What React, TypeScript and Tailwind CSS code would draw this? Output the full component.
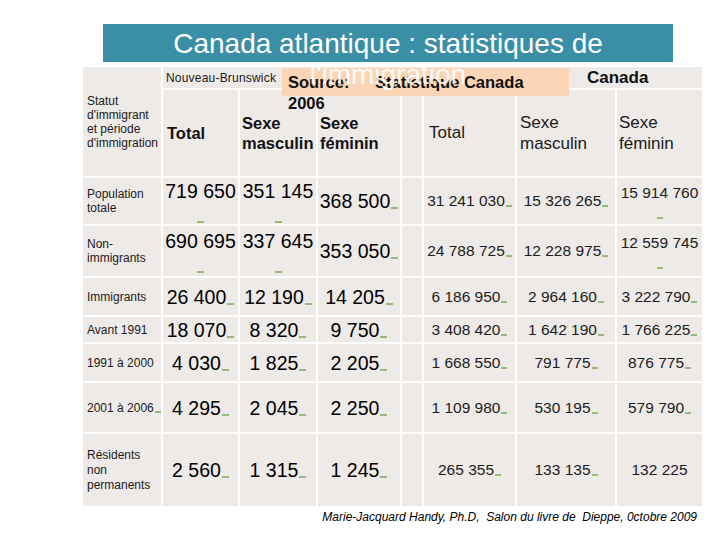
import React from "react";

const CELL = "bg-[#eeeae8]";

function Dash({ small = false }: { small?: boolean }) {
  return (
    <span
      className={
        small
          ? "inline-block w-[6px] h-[2px] bg-[#97b97b] ml-[1px] align-[-1px]"
          : "inline-block w-[7px] h-[2px] bg-[#97b97b] ml-[1px] align-[-1px]"
      }
    />
  );
}

type Row = {
  label: React.ReactNode;
  labelLeading: string;
  labelDash?: boolean;
  nb: string[];
  ca: string[];
  big?: boolean;
  caNoDash?: boolean[];
};

const rows: Row[] = [
  {
    label: (
      <>
        Population
        <br />
        totale
      </>
    ),
    labelLeading: "leading-[14px]",
    nb: ["719 650", "351 145", "368 500"],
    ca: ["31 241 030", "15 326 265", "15 914 760"],
    big: true,
  },
  {
    label: (
      <>
        Non-
        <br />
        immigrants
      </>
    ),
    labelLeading: "leading-[14px]",
    nb: ["690 695", "337 645", "353 050"],
    ca: ["24 788 725", "12 228 975", "12 559 745"],
    big: true,
  },
  {
    label: "Immigrants",
    labelLeading: "leading-[14px]",
    nb: ["26 400", "12 190", "14 205"],
    ca: ["6 186 950", "2 964 160", "3 222 790"],
  },
  {
    label: "Avant 1991",
    labelLeading: "leading-[14px]",
    nb: ["18 070", "8 320", "9 750"],
    ca: ["3 408 420", "1 642 190", "1 766 225"],
  },
  {
    label: "1991 à 2000",
    labelLeading: "leading-[14px]",
    nb: ["4 030", "1 825", "2 205"],
    ca: ["1 668 550", "791 775", "876 775"],
  },
  {
    label: "2001 à 2006",
    labelLeading: "leading-[14px]",
    labelDash: true,
    nb: ["4 295", "2 045", "2 250"],
    ca: ["1 109 980", "530 195", "579 790"],
  },
  {
    label: (
      <>
        Résidents
        <br />
        non
        <br />
        permanents
      </>
    ),
    labelLeading: "leading-[15px]",
    nb: ["2 560", "1 315", "1 245"],
    ca: ["265 355", "133 135", "132 225"],
    caNoDash: [false, false, true],
  },
];

const NB_TEXT = "whitespace-nowrap text-[19.5px] leading-[24px] text-black";
const CA_TEXT = "whitespace-nowrap text-[15.5px] leading-[18px] text-[#1c1c1c]";

function NbCell({ value, wrap }: { value: string; wrap?: boolean }) {
  if (wrap) {
    return (
      <div className={`${CELL} flex flex-col items-center justify-center`}>
        <span className={NB_TEXT}>{value}</span>
        <span className="block w-[7px] h-[2px] bg-[#97b97b] mt-[18px]" />
      </div>
    );
  }
  return (
    <div className={`${CELL} flex items-center justify-center`}>
      <span className={NB_TEXT}>
        {value}
        <Dash />
      </span>
    </div>
  );
}

function CaCell({ value, wrap, noDash }: { value: string; wrap?: boolean; noDash?: boolean }) {
  if (wrap) {
    return (
      <div className={`${CELL} flex flex-col items-center justify-center`}>
        <span className={CA_TEXT}>{value}</span>
        <span className="block w-[6px] h-[2px] bg-[#97b97b] mt-[15px]" />
      </div>
    );
  }
  return (
    <div className={`${CELL} flex items-center justify-center`}>
      <span className={CA_TEXT}>
        {value}
        {!noDash && <Dash small />}
      </span>
    </div>
  );
}

export default function App() {
  return (
    <div className="relative w-[720px] h-[540px] bg-white overflow-hidden font-['Liberation_Sans',Arial,sans-serif]">
      {/* Title */}
      <div className="pt-[24px] pl-[103px] relative z-30">
        <div className="w-[570px] h-[38px] bg-[#3a8ea5]">
          <div className="pt-[4px] text-center text-[28px] leading-[31px] text-white whitespace-nowrap">
            Canada atlantique : statistiques de
            <br />
            <span className="text-white/90">l'immigration</span>
          </div>
        </div>
      </div>

      {/* Table */}
      <div className="pl-[83px] pt-[5px]">
        <div className="grid grid-cols-[78px_75px_76px_82px_20px_91px_98px_85px] grid-rows-[21px_86px_46px_50px_37px_25px_37px_49px_72px] gap-[2px]">
          {/* header */}
          <div className={`${CELL} row-span-2 flex items-center pl-[4px] text-[12px] leading-[14px] text-[#1a1a1a]`}>
            <div>
              Statut
              <br />
              d'immigrant
              <br />
              et période
              <br />
              d'immigration
            </div>
          </div>
          <div className={`${CELL} col-span-3 flex items-center pl-[3px] text-[12px] tracking-[0.2px] text-[#1a1a1a]`}>
            Nouveau-Brunswick
          </div>
          <div className={CELL} />
          <div className={`${CELL} col-span-3 flex items-center pl-[163px] text-[17px] font-bold text-[#111]`}>
            Canada
          </div>

          <div className={`${CELL} flex items-center pl-[4px] text-[16.5px] font-bold text-[#111]`}>Total</div>
          <div className={`${CELL} flex items-center pl-[2px] text-[16.5px] leading-[20px] font-bold text-[#111]`}>
            <div>
              Sexe
              <br />
              masculin
            </div>
          </div>
          <div className={`${CELL} flex items-center pl-[2px] text-[16.5px] leading-[20px] font-bold text-[#111]`}>
            <div>
              Sexe
              <br />
              féminin
            </div>
          </div>
          <div className={CELL} />
          <div className={`${CELL} flex items-center pl-[5px] text-[17px] text-[#1a1a1a]`}>Total</div>
          <div className={`${CELL} flex items-center pl-[3px] text-[17px] leading-[21px] text-[#1a1a1a]`}>
            <div>
              Sexe
              <br />
              masculin
            </div>
          </div>
          <div className={`${CELL} flex items-center pl-[2px] text-[17px] leading-[21px] text-[#1a1a1a]`}>
            <div>
              Sexe
              <br />
              féminin
            </div>
          </div>

          {rows.map((r, i) => (
            <React.Fragment key={i}>
              <div className={`${CELL} flex items-center pl-[4px] text-[12px] ${r.labelLeading} text-[#1a1a1a]`}>
                <div>
                  {r.label}
                  {r.labelDash && <Dash small />}
                </div>
              </div>
              <NbCell value={r.nb[0]} wrap={r.big} />
              <NbCell value={r.nb[1]} wrap={r.big} />
              <NbCell value={r.nb[2]} />
              <div className={CELL} />
              <CaCell value={r.ca[0]} noDash={r.caNoDash?.[0]} />
              <CaCell value={r.ca[1]} noDash={r.caNoDash?.[1]} />
              <CaCell value={r.ca[2]} wrap={r.big} noDash={r.caNoDash?.[2]} />
            </React.Fragment>
          ))}
        </div>
        <div className="mt-[4px] pr-[7px] w-[621px] text-right text-[12px] leading-[14px] italic text-black whitespace-pre">
          {"Marie-Jacquard Handy, Ph.D,  Salon du livre de  Dieppe, 0ctobre 2009"}
        </div>
      </div>

      {/* Source overlay */}
      <div className="absolute left-[282px] top-[68px] w-[287px] h-[28px] bg-[#fbd5b6] z-20">
        <div className="pl-[6px] pt-[4px] text-[16.5px] leading-[21px] font-bold text-[#111] whitespace-nowrap">
          <span className="mr-[21px]">Source:</span> Statistique Canada
          <br />
          2006
        </div>
      </div>
    </div>
  );
}
